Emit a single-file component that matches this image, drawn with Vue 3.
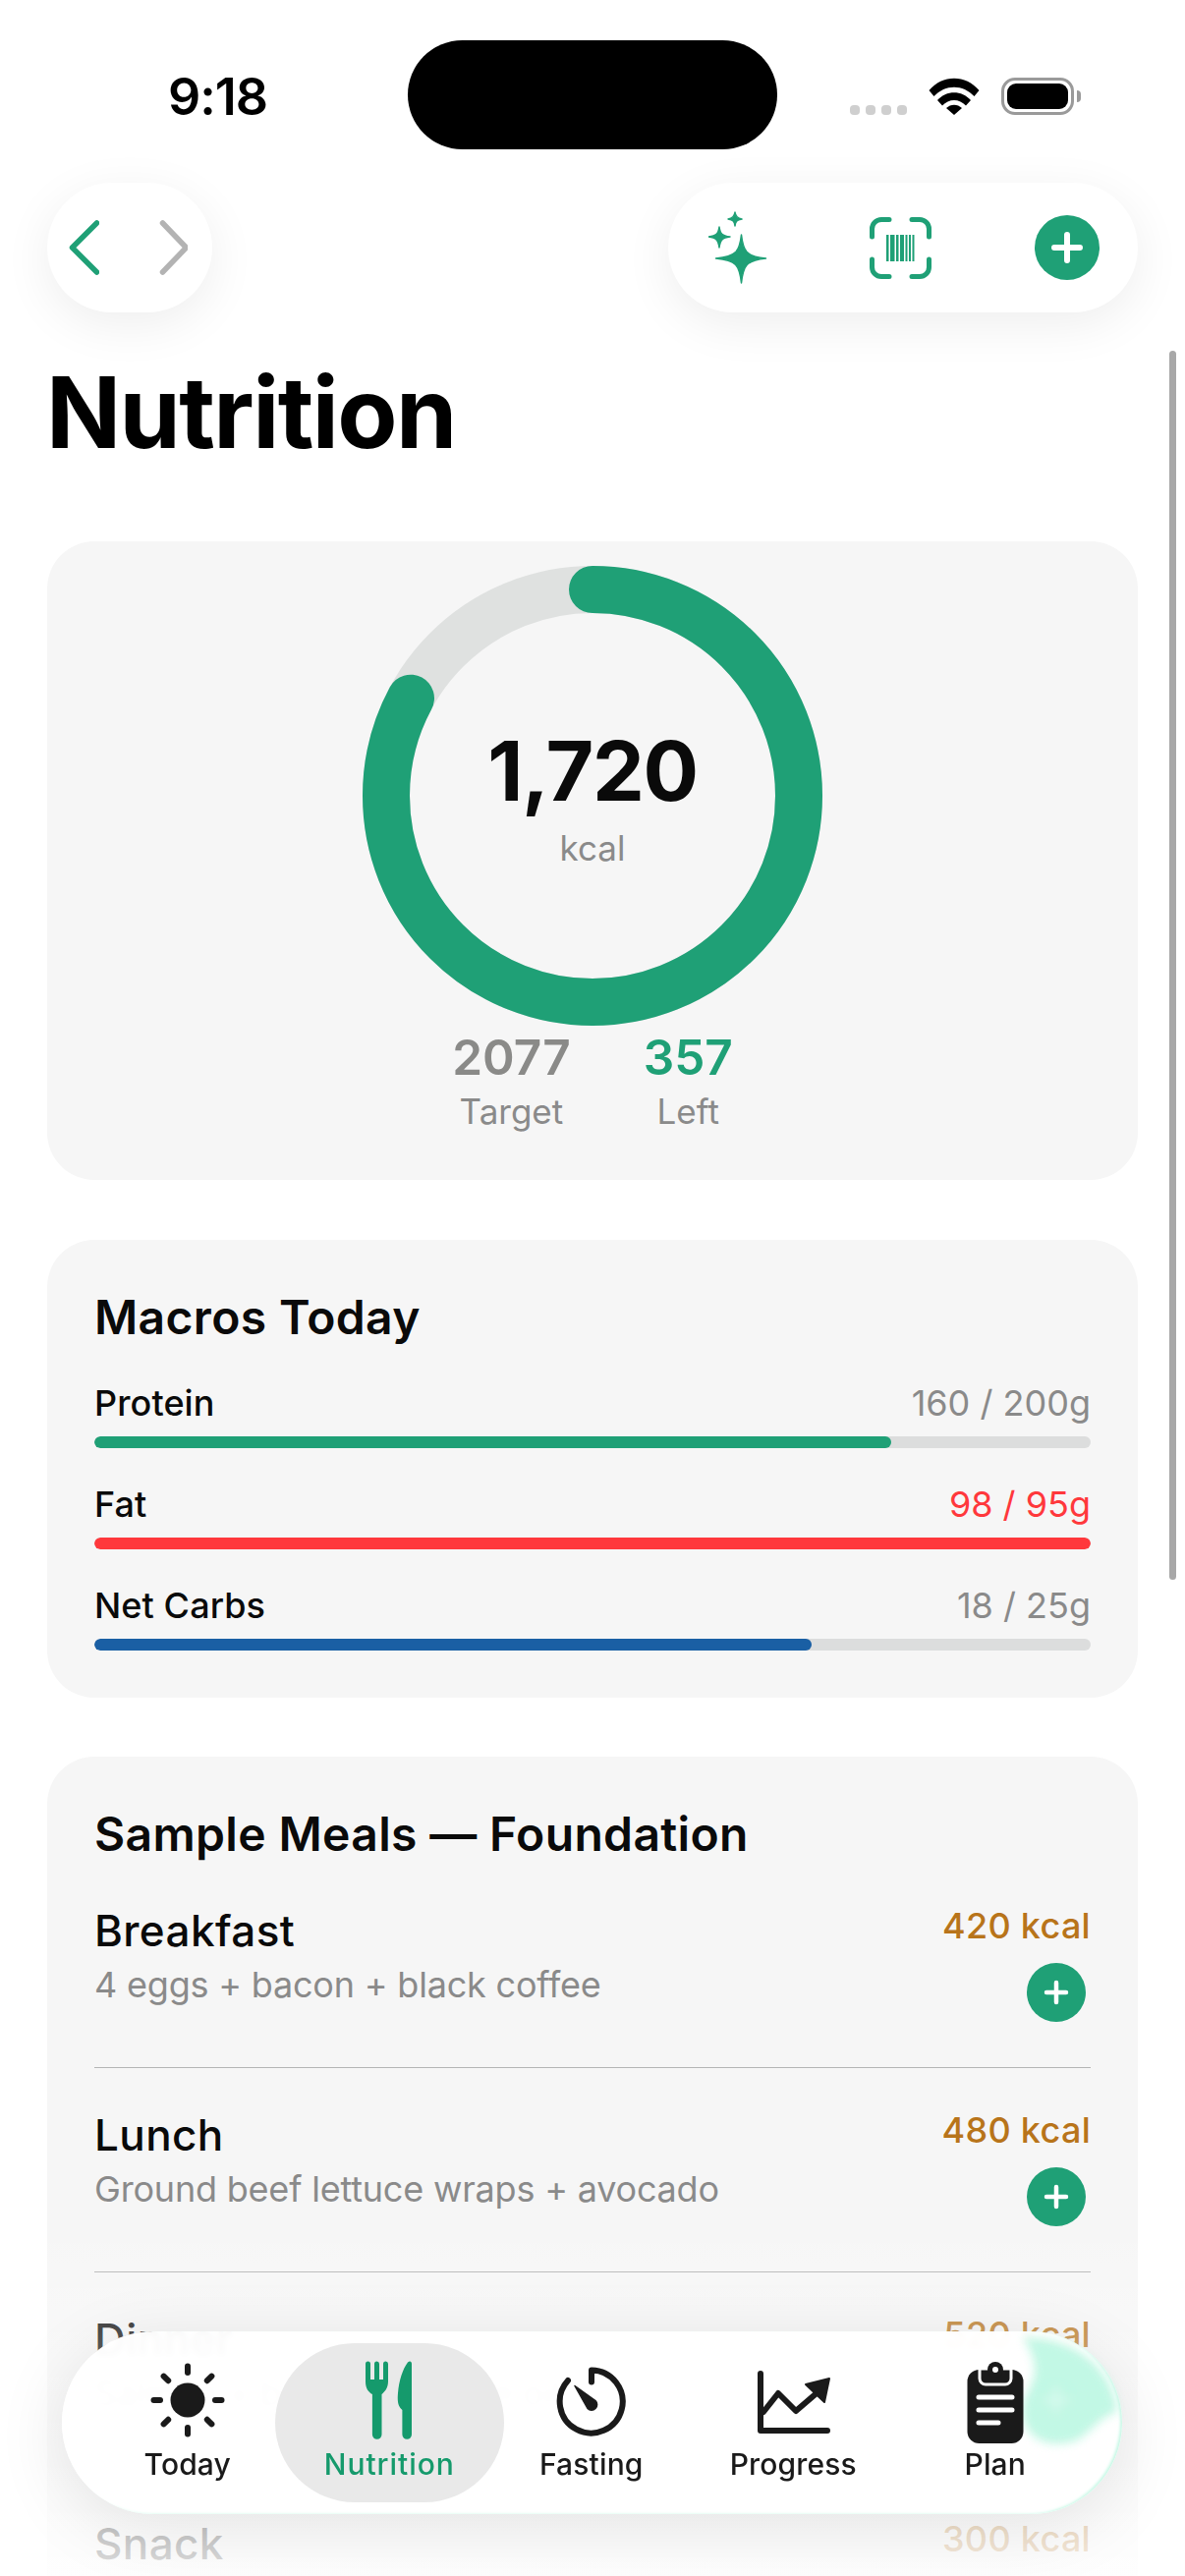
<template>
  <div class="page">
    <div class="status">
      <span class="time">9:18</span>
      <div class="status-icons">
        <div class="dots"><i v-for="n in 4" :key="n"></i></div>
        <svg class="wifi" width="52" height="38" viewBox="0 0 52 38">
          <path d="M0.5 13 C14 -3.5 38 -3.5 51.5 13 L46.5 19 C35 6.5 17 6.5 5.5 19 Z" fill="#000" />
          <path d="M9 23 C18 12.5 34 12.5 43 23 L38 28.5 C31.5 21 20.5 21 14 28.5 Z" fill="#000" />
          <path d="M18 31 C22.5 26.5 29.5 26.5 34 31 L26 38 Z" fill="#000" />
        </svg>
        <div class="battery"><div class="battery-fill"></div></div>
        <div class="battery-nub"></div>
      </div>
    </div>
    <div class="island"></div>

    <div class="toolbar">
      <div class="pill nav-pill">
        <svg width="32" height="56" viewBox="0 0 32 56">
          <path d="M29.5 3 L4.5 28 L29.5 53" fill="none" stroke="#1fa076" stroke-width="5.5" stroke-linecap="round" stroke-linejoin="round" />
        </svg>
        <svg width="32" height="56" viewBox="0 0 32 56">
          <path d="M6.5 3 L30.5 28 L6.5 53" fill="none" stroke="#b3b3b3" stroke-width="5.5" stroke-linecap="round" stroke-linejoin="round" />
        </svg>
      </div>
      <div class="pill action-pill">
        <svg width="64" height="80" viewBox="0 0 64 80">
          <g fill="#1fa076" stroke="#1fa076" stroke-width="1.5" stroke-linejoin="round">
            <path d="M44 28 C46 45 49 50 69 52 C49 54 46 59 44 77 C42 59 39 54 18 52 C39 50 42 45 44 28 Z" transform="translate(-10.5 -1)" />
            <path d="M22 21 C23 28 25 30 33 31 C25 32 23 34 22 42 C21 34 19 32 11 31 C19 30 21 28 22 21 Z" transform="translate(-11 -2)" />
            <path d="M38 6 C38.5 10 40 12 45 13 C40 14 38.5 15 38 20 C37.5 15 36 14 31 13 C36 12 37.5 10 38 6 Z" transform="translate(-11 -2)" />
          </g>
        </svg>
        <svg class="scan" width="63" height="63" viewBox="0 0 63 63">
          <path d="M2.5 20 V12 A9.5 9.5 0 0 1 12 2.5 H20 M43 2.5 H51 A9.5 9.5 0 0 1 60.5 12 V20 M2.5 43 V51 A9.5 9.5 0 0 0 12 60.5 H20 M43 60.5 H51 A9.5 9.5 0 0 0 60.5 51 V43" fill="none" stroke="#1fa076" stroke-width="5" stroke-linecap="round" />
          <g fill="#1fa076">
            <rect x="17" y="18" width="2.5" height="27" />
            <rect x="21" y="18" width="4.5" height="27" />
            <rect x="27" y="18" width="2.5" height="27" />
            <rect x="31" y="18" width="4" height="27" />
            <rect x="36.5" y="18" width="2" height="27" />
            <rect x="40" y="18" width="2" height="27" />
            <rect x="43.5" y="18" width="2" height="27" />
          </g>
        </svg>
        <div class="plus-btn big">
          <svg width="32" height="32" viewBox="0 0 32 32"><path d="M16 3 V29 M3 16 H29" stroke="#fff" stroke-width="6" stroke-linecap="round" /></svg>
        </div>
      </div>
    </div>

    <h1 class="title">Nutrition</h1>

    <section class="card ring-card">
      <div class="ring">
        <svg width="468" height="468" viewBox="0 0 468 468">
          <circle cx="234" cy="234" :r="ringRadius" fill="none" stroke="#dfe1e0" stroke-width="48" />
          <circle cx="234" cy="234" :r="ringRadius" fill="none" stroke="#1fa076" stroke-width="48" stroke-linecap="round"
            :stroke-dasharray="ringDash" transform="rotate(-90 234 234)" />
        </svg>
        <div class="ring-center">
          <div class="ring-value">1,720</div>
          <div class="ring-unit">kcal</div>
        </div>
      </div>
      <div class="stats">
        <div class="stat">
          <div class="stat-num">{{ target }}</div>
          <div class="stat-label">Target</div>
        </div>
        <div class="stat">
          <div class="stat-num green">{{ target - eaten }}</div>
          <div class="stat-label">Left</div>
        </div>
      </div>
    </section>

    <section class="card macros-card">
      <h2 class="card-title">Macros Today</h2>
      <div v-for="macro in macros" :key="macro.name" class="macro">
        <div class="macro-head">
          <span class="macro-name">{{ macro.name }}</span>
          <span class="macro-val" :class="{ over: macro.over }">{{ macro.value }}</span>
        </div>
        <div class="track">
          <div class="fill" :style="{ width: macro.pct + '%', background: macro.color }"></div>
        </div>
      </div>
    </section>

    <section class="card meals-card">
      <h2 class="card-title">Sample Meals — Foundation</h2>
      <div v-for="meal in meals" :key="meal.name" class="meal">
        <div class="meal-info">
          <div class="meal-name">{{ meal.name }}</div>
          <div class="meal-desc">{{ meal.desc }}</div>
        </div>
        <div class="meal-side">
          <div class="meal-kcal">{{ meal.kcal }} kcal</div>
          <div class="plus-btn">
            <svg width="30" height="30" viewBox="0 0 30 30"><path d="M15 5 V25 M5 15 H25" stroke="#fff" stroke-width="4.5" stroke-linecap="round" /></svg>
          </div>
        </div>
      </div>
    </section>

    <div class="fade"></div>

    <nav class="tabbar">
      <svg class="glint" width="1079" height="186" viewBox="0 0 1079 186">
        <path d="M978 6 C1030 6 1070 36 1074 82 C1056 86 1046 106 1030 112 C1002 120 980 108 978 84 C976 58 1006 48 978 6 Z" fill="#bff7e3" />
        <path d="M1012 58 V82 M1000 70 H1024" stroke="#d8fbef" stroke-width="4" stroke-linecap="round" />
      </svg>
      <div v-for="tab in tabs" :key="tab.name" class="tab" :class="{ active: tab.active }">
        <svg v-if="tab.name === 'Today'" class="tab-icon" width="76" height="80" viewBox="0 0 76 80">
          <circle cx="38" cy="40" r="17.5" fill="#1a1a1a" />
          <line v-for="a in sunRays" :key="a" x1="38" y1="5.5" x2="38" y2="12" transform-origin="38 40" :transform="`rotate(${a})`" stroke="#1a1a1a" stroke-width="6" stroke-linecap="round" />
        </svg>
        <svg v-else-if="tab.name === 'Nutrition'" class="tab-icon" width="48" height="80" viewBox="0 0 48 80">
          <g fill="#159a6c">
            <path d="M0 3 a2.5 2.5 0 0 1 5 0 V19 H9 V3 a2.5 2.5 0 0 1 5 0 V19 H18 V3 a2.5 2.5 0 0 1 5 0 V21 C23 28 19 32 16.5 34 V75 a4.8 4.8 0 0 1 -9.6 0 V34 C3 32 0 28 0 21 Z" />
            <path d="M47 3 V75 a4.8 4.8 0 0 1 -9.6 0 V50 C34 47 32 43 33 33 C34 20 38 8 43 1.5 C45 -0.5 47 0.5 47 3 Z" />
          </g>
        </svg>
        <svg v-else-if="tab.name === 'Fasting'" class="tab-icon" width="72" height="80" viewBox="0 0 72 80">
          <path d="M36 21.5 V9.5 A32 32 0 1 1 12 20" fill="none" stroke="#1a1a1a" stroke-width="6" stroke-linecap="round" stroke-linejoin="round" />
          <path d="M19 25.5 L40 40.5 A5.5 5.5 0 0 1 32 48.5 Z" fill="#1a1a1a" stroke="#1a1a1a" stroke-width="1.5" stroke-linejoin="round" />
        </svg>
        <svg v-else-if="tab.name === 'Progress'" class="tab-icon" width="78" height="80" viewBox="0 0 78 80">
          <g transform="translate(3 3)">
            <path d="M3 10 V68 H71" fill="none" stroke="#1a1a1a" stroke-width="6" stroke-linecap="round" stroke-linejoin="round" />
            <path d="M6 49 L21 30 L39 48 L60 30" fill="none" stroke="#1a1a1a" stroke-width="6" stroke-linecap="round" stroke-linejoin="round" />
            <path d="M73 15 L49 21 L68 39 Z" fill="#1a1a1a" stroke="#1a1a1a" stroke-width="2" stroke-linejoin="round" />
          </g>
        </svg>
        <svg v-else class="tab-icon" width="58" height="84" viewBox="0 0 58 84">
          <rect x="0.5" y="9" width="57" height="75" rx="12" fill="#1a1a1a" />
          <path d="M13 8 H45 V18 A6 6 0 0 1 39 24 H19 A6 6 0 0 1 13 18 Z" fill="#1a1a1a" stroke="#fff" stroke-width="3" />
          <circle cx="29" cy="9" r="8" fill="#1a1a1a" />
          <circle cx="29" cy="9" r="3" fill="#fff" />
          <path d="M12 37 H46 M12 50 H46 M12 63 H32" stroke="#fff" stroke-width="5" stroke-linecap="round" />
        </svg>
        <span class="tab-label">{{ tab.name }}</span>
      </div>
    </nav>

    <div class="scrollbar"></div>
  </div>
</template>

<script setup>
import { computed } from 'vue'

const eaten = 1720
const target = 2077
const ringRadius = 210

// dash length follows how much of the target is eaten
const ringDash = computed(() => {
  const full = 2 * Math.PI * ringRadius
  return `${full * (eaten / target)} ${full}`
})

const sunRays = [0, 45, 90, 135, 180, 225, 270, 315]

const macros = [
  { name: 'Protein', value: '160 / 200g', pct: 80, color: '#1fa076' },
  { name: 'Fat', value: '98 / 95g', pct: 100, color: '#ff383c', over: true },
  { name: 'Net Carbs', value: '18 / 25g', pct: 72, color: '#1a5fa4' },
]

const meals = [
  { name: 'Breakfast', desc: '4 eggs + bacon + black coffee', kcal: 420 },
  { name: 'Lunch', desc: 'Ground beef lettuce wraps + avocado', kcal: 480 },
  { name: 'Dinner', desc: 'Salmon + broccoli + olive oil', kcal: 520 },
  { name: 'Snack', desc: '', kcal: 300 },
]

const tabs = [
  { name: 'Today' },
  { name: 'Nutrition', active: true },
  { name: 'Fasting' },
  { name: 'Progress' },
  { name: 'Plan' },
]
</script>

<style>
html,
body {
  margin: 0;
  background: #fff;
}
</style>

<style scoped>
.page {
  position: relative;
  width: 1206px;
  height: 2622px;
  overflow: hidden;
  background: #fff;
  color: #0a0a0a;
  font-family: Inter, "Noto Sans", sans-serif;
}

.status {
  display: flex;
  justify-content: space-between;
  align-items: center;
  box-sizing: border-box;
  height: 186px;
  padding: 10px 106px 0 171px;
}

.time {
  color: #000;
  font-size: 52px;
  font-weight: 600;
  letter-spacing: -1px;
}

.status-icons {
  display: flex;
  align-items: flex-end;
}

.dots {
  display: flex;
  gap: 6px;
  margin-right: 22px;
}

.dots i {
  width: 10px;
  height: 10px;
  border-radius: 4px;
  background: #cfcfcf;
}

.wifi {
  margin-right: 22px;
}

.battery {
  box-sizing: border-box;
  width: 74px;
  height: 38px;
  padding: 3px;
  border: 3.5px solid #9a9a9a;
  border-radius: 14px;
}

.battery-fill {
  height: 100%;
  border-radius: 9px;
  background: #000;
}

.battery-nub {
  width: 4px;
  height: 12px;
  margin: 0 0 13px 3px;
  border-radius: 0 4px 4px 0;
  background: #9a9a9a;
}

.island {
  position: absolute;
  top: 41px;
  left: 415px;
  width: 376px;
  height: 111px;
  border-radius: 56px;
  background: #000;
}

.toolbar {
  display: flex;
  justify-content: space-between;
  padding: 0 48px;
}

.pill {
  display: flex;
  align-items: center;
  height: 132px;
  border-radius: 66px;
  background: #fff;
  box-shadow: 0 12px 50px rgba(0, 0, 0, 0.07);
}

.nav-pill {
  gap: 58px;
  box-sizing: border-box;
  width: 168px;
  padding-left: 21px;
}

.action-pill {
  box-sizing: border-box;
  width: 478px;
  padding-left: 41px;
}

.scan {
  margin-left: 100px;
}

.plus-btn {
  display: flex;
  align-items: center;
  justify-content: center;
  flex-shrink: 0;
  width: 60px;
  height: 60px;
  border-radius: 50%;
  background: #1fa076;
}

.plus-btn.big {
  width: 66px;
  height: 66px;
  margin-left: 105px;
}

.title {
  margin: 42px 0 71px 47px;
  font-size: 100px;
  font-weight: 700;
  line-height: 120px;
  letter-spacing: -1.6px;
  color: #000;
}

.card {
  margin: 0 48px;
  border-radius: 48px;
  background: #f6f6f6;
}

.ring-card {
  display: flex;
  flex-direction: column;
  align-items: center;
  box-sizing: border-box;
  height: 650px;
  padding-top: 25px;
}

.ring {
  position: relative;
  width: 468px;
  height: 468px;
}

.ring svg {
  display: block;
}

.ring-center {
  position: absolute;
  top: 159px;
  left: 0;
  right: 0;
  text-align: center;
}

.ring-value {
  font-size: 84px;
  font-weight: 700;
  line-height: 100px;
  letter-spacing: -1.4px;
}

.ring-unit {
  margin-top: 6px;
  color: #8a8a8a;
  font-size: 35px;
  line-height: 44px;
}

.stats {
  display: flex;
  gap: 74px;
  margin-top: 2px;
}

.stat {
  text-align: center;
}

.stat-num {
  color: #8a8a88;
  font-size: 49.5px;
  font-weight: 600;
  line-height: 60px;
}

.stat-num.green {
  color: #1fa076;
}

.stat-label {
  margin-top: 3px;
  color: #8a8a8a;
  font-size: 35px;
  line-height: 44px;
}

.macros-card {
  margin-top: 61px;
  padding: 50px 48px 48px;
}

.card-title {
  margin: 0 0 36px;
  font-size: 48px;
  font-weight: 600;
  line-height: 58px;
  letter-spacing: 0.35px;
}

.macro + .macro {
  margin-top: 35px;
}

.macro-head {
  display: flex;
  justify-content: space-between;
  font-size: 36px;
  line-height: 44px;
}

.macro-name {
  font-weight: 500;
  letter-spacing: 0.1px;
}

.macro-val {
  color: #8a8a8a;
}

.macro-val.over {
  color: #ff383c;
}

.track {
  height: 12px;
  margin-top: 12px;
  border-radius: 6px;
  background: #dcdddd;
  overflow: hidden;
}

.fill {
  height: 100%;
  border-radius: 6px;
}

.meals-card {
  margin-top: 60px;
  padding: 50px 48px 60px;
}

.meals-card .card-title {
  margin-bottom: 41.5px;
}

.meal {
  display: flex;
  justify-content: space-between;
  padding-bottom: 46px;
}

.meal + .meal {
  padding-top: 41px;
  border-top: 1px solid #b4b5b5;
}

.meal-info {
  padding-top: 1px;
}

.meal-name {
  font-size: 44px;
  font-weight: 500;
  line-height: 52px;
  letter-spacing: 0.4px;
}

.meal-desc {
  margin-top: 7px;
  color: #8a8a8a;
  font-size: 36px;
  line-height: 44px;
  letter-spacing: -0.2px;
}

.meal-side {
  display: flex;
  flex-direction: column;
  align-items: flex-end;
}

.meal-kcal {
  color: #b8741a;
  font-size: 36px;
  font-weight: 500;
  line-height: 44px;
  letter-spacing: 0.3px;
}

.meal-side .plus-btn {
  margin: 16px 5px 0 0;
}

.fade {
  position: absolute;
  left: 0;
  right: 0;
  top: 2260px;
  bottom: 0;
  background: linear-gradient(rgba(255, 255, 255, 0), rgba(255, 255, 255, 0.88));
}

.tabbar {
  position: absolute;
  top: 2373px;
  left: 63px;
  display: grid;
  grid-template-columns: repeat(5, 205.5px);
  box-sizing: border-box;
  width: 1079px;
  height: 186px;
  padding: 0 0 0 25px;
  border-radius: 93px;
  background: rgba(255, 255, 255, 0.97);
  box-shadow: 0 14px 70px rgba(0, 0, 0, 0.1), inset -3px -1px 3px -1px #c8f8e6;
  backdrop-filter: blur(3px);
}

.glint {
  position: absolute;
  top: 0;
  left: 0;
  filter: blur(5px);
  opacity: 0.95;
}

.tab {
  position: relative;
  display: flex;
  flex-direction: column;
  align-items: center;
  color: #1a1a1a;
}

.tab.active {
  color: #159a6c;
}

.tab.active::before {
  content: "";
  position: absolute;
  top: 12px;
  left: -14px;
  right: -14px;
  height: 162px;
  border-radius: 81px;
  background: #e9e9e9;
}

.tab-icon {
  position: absolute;
  top: 30px;
}

.tab-label {
  position: absolute;
  top: 116px;
  font-size: 30px;
  font-weight: 500;
  line-height: 38px;
  letter-spacing: 0.15px;
}

.tab.active .tab-label {
  letter-spacing: 0.95px;
}

.scrollbar {
  position: absolute;
  top: 357px;
  left: 1190px;
  width: 7px;
  height: 1251px;
  border-radius: 4px;
  background: #a8a8a8;
}
</style>
